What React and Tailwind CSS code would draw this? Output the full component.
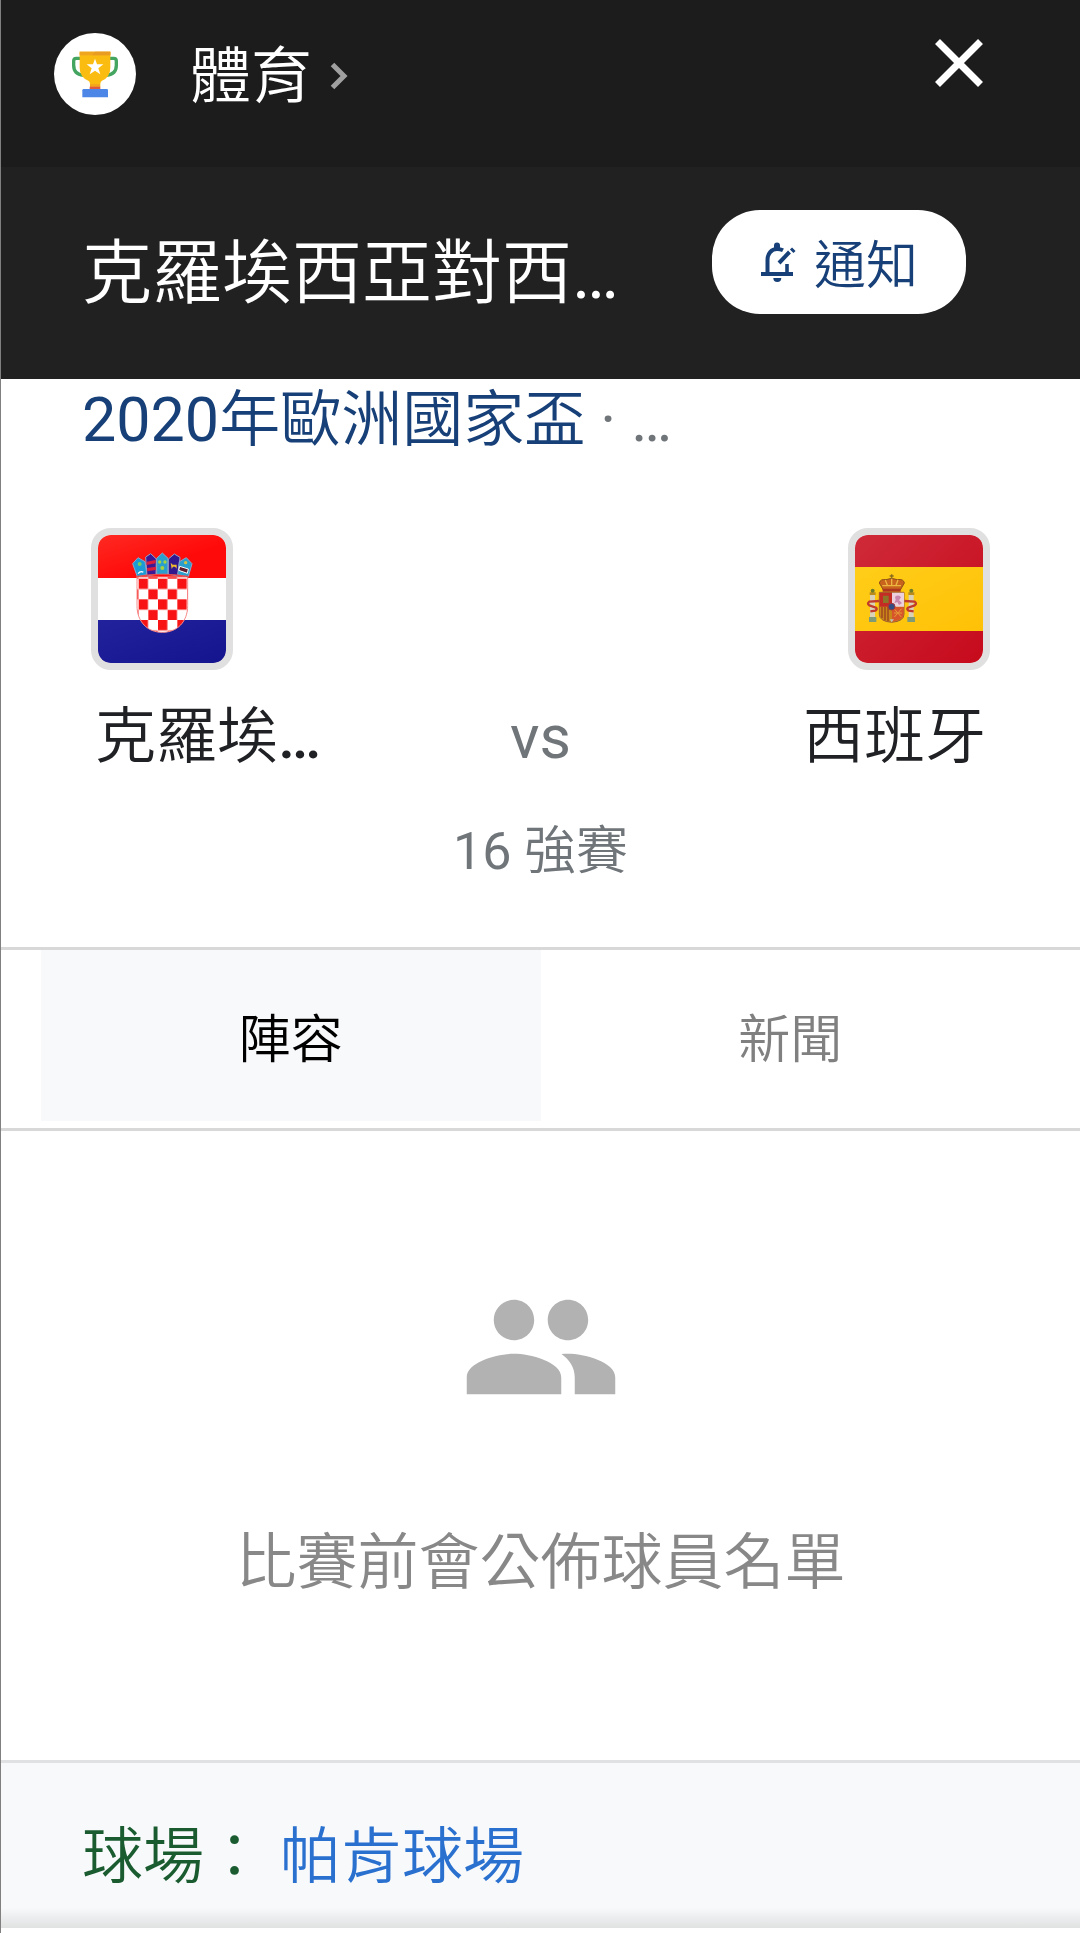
import React, { useState } from 'react';
import { MdPeople } from 'react-icons/md';

const TrophyIcon = () => (
    <svg viewBox="42 41 246 244" className="w-full h-full" aria-hidden="true">
        <path d="M124 116h-15q-8 0-8 8v13q0 27 29 30M206 116h15q8 0 8 8v13q0 27-29 30" fill="none" stroke="#43a560" strokeWidth="10" />
        <path d="M119 96h92v48q0 28-25 39-5 3-5 10v8h-31v-8q0-7-5-10-26-11-26-39z" fill="#fbbc12" />
        <path d="M119 96h92v11h-92z" fill="#f0a51e" />
        <path d="M165 96h46v11h-54z" fill="#e89c22" />
        <path d="M150 193h30v9h-30z" fill="#f3a71c" />
        <path d="M149 201h32v8h-32z" fill="#df5b3f" />
        <path d="M131 208h69q4 0 4 4v21h-77v-21q0-4 4-4z" fill="#4c87e8" />
        <path d="M165 117l6 17 19 0-15 12 6 18-16-11-16 11 6-18-15-12h19z" fill="#fff" />
    </svg>
);

const BellEditIcon = () => (
    <svg viewBox="759 243 36 42" className="w-[36px] h-[42px] shrink-0" fill="none" stroke="currentColor" strokeWidth="4" aria-hidden="true">
        <path d="M760 276h32" />
        <path d="M766.5 276v-14c0-6.500 4-11 9.500-11 2.500 0 4 .3 6 1.300" />
        <path d="M786 275v-9" strokeWidth="3.600" />
        <path d="M778 265l10.500-11" />
        <path d="M790 250.500l3.500 3.500" strokeWidth="3" />
        <path d="M773 250v-2.500a3 3 0 016 0v2.500z" fill="currentColor" stroke="none" />
        <path d="M772.300 280h8a4 4 0 01-8 0z" fill="currentColor" stroke="none" />
    </svg>
);

const CroatiaFlag = () => (
    <svg viewBox="84 72 384 384" className="w-full h-full" role="img" aria-label="克羅埃西亞">
        <defs>
            <linearGradient id="hr-red" x1="0" y1="0" x2="1" y2="1">
                <stop offset="0" stopColor="#ff2a22" />
                <stop offset="0.6" stopColor="#ff0a0a" />
            </linearGradient>
            <linearGradient id="hr-blue" x1="0" y1="0" x2="1" y2="1">
                <stop offset="0" stopColor="#22229c" />
                <stop offset="1" stopColor="#14148e" />
            </linearGradient>
            <pattern id="hr-check" x="206" y="203" width="58" height="62" patternUnits="userSpaceOnUse">
                <path d="M0 0h58v62H0z" fill="#fff" />
                <path d="M0 0h28v31H0zM29 32h28v30H29z" fill="#f81414" />
            </pattern>
        </defs>
        <path d="M84 72h384v129H84z" fill="url(#hr-red)" />
        <path d="M84 201h384v126H84z" fill="#fff" />
        <path d="M84 327h384v129H84z" fill="url(#hr-blue)" />
        <path d="M201 198h152v86c0 48-31 80-76 80s-76-32-76-80z" fill="url(#hr-check)" stroke="#f78c8c" strokeWidth="3" />
        <g stroke="#8fa4c8" strokeWidth="3">
            <path d="M188 158l16-18 21 12 6 39-29 6z" fill="#1b9bd6" />
            <path d="M227 138l15-10 17 16-1 46-27 5z" fill="#3c1894" />
            <path d="M260 142l17-16 17 16v48h-34z" fill="#2a9fce" />
            <path d="M295 144l18-15 17 10-6 56-29-5z" fill="#32188f" />
            <path d="M328 152l21-12 17 18-11 39-32-6z" fill="#2a9fce" />
        </g>
        <path d="M230 152l27-5v10l-28 5zM231 171l27-4v10l-26 4z" fill="#dc1c3c" />
        <path d="M204 188q8-10 16-4" stroke="#fff" strokeWidth="4" fill="none" />
        <circle cx="209" cy="159" r="6" fill="#74d05a" />
        <circle cx="269" cy="153" r="5" fill="#a4d340" />
        <circle cx="285" cy="153" r="5" fill="#a4d340" />
        <circle cx="277" cy="171" r="6" fill="#a4d340" />
        <path d="M302 155l6 6h12v12l-5-6h-6l-4 7z" fill="#f3ba2e" />
        <circle cx="347" cy="155" r="5" fill="#d0c343" />
        <path d="M329 166l26 8-3 13-26-9z" fill="#621b2c" stroke="#fff" strokeWidth="3" />
        <path d="M198 197q79-14 158 0" fill="none" stroke="#e44848" strokeWidth="4" />
    </svg>
);

const SpainFlag = () => (
    <svg viewBox="74 72 384 384" className="w-full h-full" role="img" aria-label="西班牙">
        <defs>
            <linearGradient id="es-red" gradientUnits="userSpaceOnUse" x1="74" y1="72" x2="458" y2="456">
                <stop offset="0" stopColor="#cf2a38" />
                <stop offset="1" stopColor="#c60a1c" />
            </linearGradient>
            <linearGradient id="es-yellow" x1="0" y1="0" x2="1" y2="1">
                <stop offset="0" stopColor="#ffcd18" />
                <stop offset="1" stopColor="#ffc107" />
            </linearGradient>
        </defs>
        <path d="M74 72h384v384H74z" fill="url(#es-red)" />
        <path d="M74 168h384v192H74z" fill="url(#es-yellow)" />
        {/* pillars */}
        <path d="M119 250h15v68h-15zM235 250h15v68h-15z" fill="#d9d2b8" />
        <path d="M116 318h22v15h-22zM231 318h23v15h-23z" fill="#7f9a77" />
        <path d="M118 244h18v8h-18zM234 244h18v8h-18z" fill="#b98a1e" />
        <circle cx="127" cy="239" r="6" fill="#6f7d2a" />
        <circle cx="243" cy="239" r="6" fill="#6f7d2a" />
        <path d="M148 270l-31 2q-8 6 0 11l20 7q5 5-2 9l-15 2M222 270l31 2q8 6 0 11l-20 7q-5 5 2 9l15 2" fill="none" stroke="#c03a2e" strokeWidth="7" />
        {/* crown */}
        <path d="M159 237l-12-21q3-13 20-10l17-4 17 4q19-3 21 10l-12 21z" fill="#c8641c" stroke="#8f4f18" strokeWidth="3" />
        <path d="M184 202v22M165 207l7 18M203 207l-7 18M156 224h56" stroke="#edb640" strokeWidth="4" fill="none" />
        <path d="M184 190v13M178 195h12" stroke="#8a6a1c" strokeWidth="4" />
        <path d="M157 233h54v9h-54z" fill="#ad351f" />
        {/* shield */}
        <path d="M147 244h74v66q0 21-37 24-37-3-37-24z" fill="#c98618" stroke="#9c6032" strokeWidth="3" />
        <path d="M148 245h37v42h-37z" fill="#c42b24" />
        <path d="M185 245h36v42h-36z" fill="#ecd0dc" />
        <path d="M158 254h17v22h-17z" fill="#8e7428" />
        <path d="M194 257q12-8 18 2l-6 9 9 8-9 6-5-9-9 4 4-11z" fill="#c987ad" />
        <path d="M155 288v33M164 288v40M173 288v42" stroke="#9b3e20" strokeWidth="4" />
        <path d="M185 288h35v22q0 17-35 22z" fill="#d8552c" />
        <path d="M191 293l22 25M214 293l-22 25M191 306h24" stroke="#e59b36" strokeWidth="3" />
        <circle cx="184" cy="287" r="10" fill="#304d84" stroke="#a5363c" strokeWidth="3" />
        <path d="M178 325h13l-7 9z" fill="#bfc1b4" />
    </svg>
);

const Flag = ({ children }) => (
    <div className="w-[142px] h-[142px] border-[7px] border-[#e0e0e0] bg-[#fbe3e5] rounded-[20px] overflow-hidden">
        <div className="w-full h-full rounded-[12px] overflow-hidden">{children}</div>
    </div>
);

const tabs = [
    { id: 'lineup', label: '陣容' },
    { id: 'news', label: '新聞' },
];

const App = () => {
    const [activeTab, setActiveTab] = useState('lineup');

    return (
        <div className="min-h-screen bg-white border-l border-[#808080] font-['Roboto','Noto_Sans_CJK_TC',sans-serif] font-[350]" lang="zh-Hant">
            {/* Top bar */}
            <header className="flex items-start bg-[#1c1c1c] pt-[33px] pb-[52px] pl-[53px] pr-[97px]">
                <div className="w-[82px] h-[82px] rounded-full bg-white shrink-0">
                    <TrophyIcon />
                </div>
                <a href="#sports" className="flex items-center ml-[54px] h-[82px] text-[61px] leading-[80px] text-white">
                    <span className="pt-[5px]">體育</span>
                    <svg viewBox="0 0 18 28" className="w-[18px] h-[28px] ml-[18px] mt-[4px]" fill="none" stroke="#a0a0a0" strokeWidth="5" aria-hidden="true">
                        <path d="M2.500 2.500L14 14 2.500 25.500" />
                    </svg>
                </a>
                <button type="button" aria-label="關閉" className="flex items-center ml-auto h-[60px]">
                    <svg viewBox="0 0 48 48" className="w-[48px] h-[48px]" fill="none" stroke="#fff" strokeWidth="7" aria-hidden="true">
                        <path d="M2.500 2.500l43 43M45.500 2.500l-43 43" />
                    </svg>
                </button>
            </header>

            {/* Match title */}
            <div className="flex items-start justify-between bg-[#212121] pt-[43px] pb-[41px] pl-[81px] pr-[114px]">
                <h1 className="text-[70px] leading-[128px] text-white whitespace-nowrap">克羅埃西亞對西<span className="font-normal">…</span></h1>
                <button type="button" className="flex items-center justify-center gap-[18px] w-[254px] h-[104px] rounded-[48px] bg-white text-[#174078] text-[52px] leading-[70px]">
                    <BellEditIcon />
                    <span className="pt-[10px]">通知</span>
                </button>
            </div>

            {/* Score card */}
            <section className="border-b-[3px] border-[#d8d8d8] pt-px pb-[60px]">
                <p className="px-[81px] text-[61px] leading-[80px] text-[#70757a] whitespace-nowrap">
                    <a href="#league" className="text-[#174078]"><span className="font-normal">2020</span>年歐洲國家盃</a>
                    <span className="font-normal"> · …</span>
                </p>
                <div className="flex justify-between px-[90px] mt-[68px]">
                    <Flag><CroatiaFlag /></Flag>
                    <Flag><SpainFlag /></Flag>
                </div>
                <div className="grid grid-cols-3 items-center px-[94px] mt-[27px] text-[61px] leading-[80px] text-[#202124]">
                    <span className="whitespace-nowrap">克羅埃<span className="font-medium">…</span></span>
                    <span className="text-center font-normal text-[#70757a]">vs</span>
                    <span className="text-right">西班牙</span>
                </div>
                <p className="mt-[40px] text-center text-[52px] leading-[70px] text-[#70757a]"><span className="font-normal">16</span> 強賽</p>
            </section>

            {/* Tabs */}
            <div role="tablist" className="flex px-[40px] pb-[7px] border-b-[3px] border-[#d8d8d8]">
                {tabs.map((tab) => (
                    <button
                        key={tab.id}
                        type="button"
                        role="tab"
                        aria-selected={activeTab === tab.id}
                        onClick={() => setActiveTab(tab.id)}
                        className={`flex-1 h-[171px] pt-[10px] text-[52px] leading-[70px] ${activeTab === tab.id ? 'bg-[#f8f9fb] text-black' : 'text-[#808080]'}`}
                    >
                        {tab.label}
                    </button>
                ))}
            </div>

            <section className="flex flex-col items-center pt-[135px] pb-[157px]">
                <MdPeople className="w-[162px] h-[162px] text-[#b2b2b2]" />
                <p className="mt-[95px] text-[61px] leading-[80px] text-[#888888]">比賽前會公佈球員名單</p>
            </section>

            {/* Venue */}
            <footer className="border-t-[3px] border-[#dfe1e3] bg-[#f8f9fb]">
                <p className="px-[81px] pt-[54px] text-[61px] leading-[80px] text-[#1a5c30]">
                    球場： <a href="#venue" className="text-[#2a70cf]">帕肯球場</a>
                </p>
                <div className="mt-[11px] h-[20px] bg-linear-to-b from-[#f8f9fb] to-[#e0e1e1]" />
            </footer>
        </div>
    );
};

export default App;
